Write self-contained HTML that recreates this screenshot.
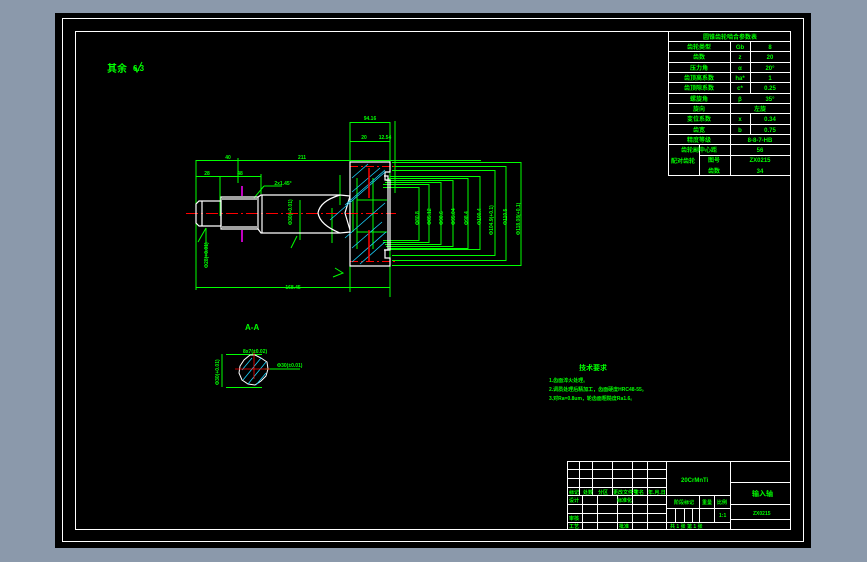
<!DOCTYPE html>
<html><head><meta charset="utf-8"><style>
html,body{margin:0;padding:0;background:#8b99ab;}
svg{display:block}
text{font-family:"Liberation Sans","Noto Sans CJK SC",sans-serif;fill:#00ff00;font-weight:bold}
</style></head><body>
<svg width="867" height="562" viewBox="0 0 867 562" xmlns="http://www.w3.org/2000/svg">
<rect x="0" y="0" width="867" height="562" fill="#8b99ab"/>
<rect x="55" y="13" width="756" height="535" fill="#000"/>
<rect x="62.5" y="18.5" width="741" height="523" fill="none" stroke="#fff" stroke-width="1"/>
<rect x="75.5" y="31.5" width="715" height="498" fill="none" stroke="#fff" stroke-width="1"/>

<text x="107" y="72" font-size="10">其余</text>
<text x="133" y="71" font-size="8">6.3</text>
<path d="M134 66 l3 6 l5 -10" stroke="#0f0" fill="none"/>

<!-- parameter table -->
<g stroke="#fff" stroke-width="1" fill="none">
<rect x="668.5" y="31.5" width="122" height="144"/>
<path d="M668 41.5h123M668 51.5h123M668 62.5h123M668 72.5h123M668 82.5h123M668 93.5h123M668 103.5h123M668 113.5h123M668 124.5h123M668 134.5h123M668 144.5h123M699 155.5h92"/>
<path d="M730.5 41v134M750.5 41v52M750.5 113v21M699.5 144v31"/>
</g>
<g font-size="6" text-anchor="middle">
<text x="730" y="39">圆锥齿轮啮合参数表</text>
<text x="699" y="49">齿轮类型</text><text x="740" y="49">Gb</text><text x="770" y="49">8</text>
<text x="699" y="59">齿数</text><text x="740" y="59">z</text><text x="770" y="59">20</text>
<text x="699" y="70">压力角</text><text x="740" y="70">α</text><text x="770" y="70">20°</text>
<text x="699" y="80">齿顶高系数</text><text x="740" y="80">ha*</text><text x="770" y="80">1</text>
<text x="699" y="90">齿顶隙系数</text><text x="740" y="90">c*</text><text x="770" y="90">0.25</text>
<text x="699" y="101">螺旋角</text><text x="740" y="101">β</text><text x="770" y="101">35°</text>
<text x="699" y="111">旋向</text><text x="760" y="111">左旋</text>
<text x="699" y="121">变位系数</text><text x="740" y="121">x</text><text x="770" y="121">0.34</text>
<text x="699" y="132">齿宽</text><text x="740" y="132">b</text><text x="770" y="132">0.75</text>
<text x="699" y="142">精度等级</text><text x="760" y="142">8-8-7-HB</text>
<text x="699" y="152">齿轮副中心距</text><text x="760" y="152">56</text>
<text x="683" y="163">配对齿轮</text><text x="714" y="162">图号</text><text x="760" y="162">ZX0215</text>
<text x="714" y="173">齿数</text><text x="760" y="173">34</text>
</g>

<!-- main view -->
<g stroke="#0f0" stroke-width="1" fill="none">
<!-- dims top -->
<path d="M196 160v130M196 160.5h285M196 176.5h65M238 158v25M261 174v20M220 176v40M350 122v170M350 122.5h40M350 141.5h40M390 122v175M196 287.5h194M395 121v72M396 141.5h0"/>
<path d="M264 186h18M264 186l-10 12"/>
<path d="M206 228v30M300 200v40M206 228l-8 14M297 236l-6 12"/>
<!-- nested bracket dims -->
<path d="M383 187.5h36v53h-36M383 184.5h46v58h-46M385 182.5h56v62h-56M386 180.5h67v66h-67M388 178.5h80v70h-80M390 176.5h90v73h-90M392 170.5h103v85h-103M392 166.5h114v94h-114M392 162.5h129v103h-129"/>
<path d="M357 178v71M373 178v71M353 200v32M357 200h30M357 232h30"/>
<path d="M332 208v35M340 175v30"/>
<path d="M335 268l8 5 l-10 4"/>
</g>
<!-- centerline -->
<path d="M186 213.5h210" stroke="#f00" stroke-dasharray="12 3 2 3" fill="none"/>
<path d="M350 166.5h45M350 261.5h45" stroke="#f00" stroke-dasharray="8 3 2 3"/>
<!-- shaft -->
<g stroke="#fff" stroke-width="1.2" fill="none">
<path d="M199 201h22v25h-22l-3 -3v-19z M202 201v25"/>
<path d="M221 197h37v32h-37z M222 199h35M222 227h35"/>
<path d="M258 197l3 -2h79l10 1M258 229l3 4h79l10 -1 M262 195v38"/>
<path d="M350 162h40v10h-5v8h5v70h-5v8h5v8h-40z"/>
<path d="M340 195q-20 6 -22 18q2 12 22 20"/>
<path d="M350 196l-5 17l5 17"/>
<path d="M384 176h4v74h-4"/>
</g>
<g stroke="#19d3ff" stroke-width="0.8">
<path d="M352 178l16 -14M352 192l28 -24M345 205l40 -35M330 220l55 -48M345 238l40 -35M352 248l30 -26M352 262l34 -30M360 264l25 -22"/>
</g>
<path d="M369 168v30M369 230v32" stroke="#f00" stroke-width="1.5"/>
<g fill="#0f0" font-size="5" text-anchor="middle">
<text x="228" y="159">40</text><text x="302" y="159">211</text>
<text x="370" y="120">94.16</text><text x="364" y="139">20</text><text x="385" y="139">12.54</text>
<text x="207" y="175">28</text><text x="240" y="175">48</text>
<text x="283" y="185">2x1.45°</text>
<text x="293" y="289">168.45</text>
</g>
<g fill="#0f0" font-size="5">
<text transform="translate(292 225) rotate(-90)">Φ30(+0.01)</text>
<text transform="translate(208 268) rotate(-90)">Φ28(+0.01)</text>
<text transform="translate(419 225) rotate(-90)">Φ80.8</text>
<text transform="translate(431 225) rotate(-90)">Φ85.12</text>
<text transform="translate(443 225) rotate(-90)">Φ90.6</text>
<text transform="translate(455 225) rotate(-90)">Φ95.04</text>
<text transform="translate(468 225) rotate(-90)">Φ98.4</text>
<text transform="translate(481 225) rotate(-90)">Φ100.4</text>
<text transform="translate(493 235) rotate(-90)">Φ104.9(+0.1)</text>
<text transform="translate(507 225) rotate(-90)">Φ110.5</text>
<text transform="translate(520 235) rotate(-90)">Φ118.08(+0.1)</text>
</g>
<path d="M242 186v10M242 230v12" stroke="#f0f" stroke-width="1.5"/>

<!-- section A-A -->
<text x="245" y="330" font-size="8">A-A</text>
<path d="M226 354.5h36M222 354v33M226 387.5h36" stroke="#0f0" fill="none"/>
<path d="M265 369h35" stroke="#0f0"/>
<path d="M255 355l6 3l6 4l1 7l-2 7l-5 5l-6 4l-7 -1l-6 -4l-3 -7l1 -7l4 -6l6 -5z" fill="none" stroke="#fff"/>
<g stroke="#19d3ff" stroke-width="0.8"><path d="M242 370l10 -12M243 380l18 -22M248 384l18 -22M256 385l10 -12"/></g>
<path d="M235 369h35M254 351v28" stroke="#f00" stroke-width="0.8"/>
<g font-size="5"><text x="243" y="353">8x7(±0.02)</text><text x="277" y="367">Φ30(±0.01)</text>
<text transform="translate(219 385) rotate(-90)">Φ30(+0.01)</text></g>

<!-- tech requirements -->
<text x="579" y="370" font-size="7">技术要求</text>
<g font-size="5"><text x="549" y="382">1.齿面淬火处理。</text>
<text x="549" y="391">2.调质处理后精加工，齿面硬度HRC48-55。</text>
<text x="549" y="400">3.对Ra=0.8um，轮齿面粗糙度Ra1.6。</text></g>

<!-- title block -->
<g stroke="#fff" stroke-width="1" fill="none">
<rect x="567.5" y="461.5" width="223" height="68"/>
<path d="M567 469.5h99M567 478.5h99M567 487.5h99M567 495.5h163M567 504.5h99M567 513.5h99M567 522.5h163M666 508.5h64"/>
<path d="M579.5 461v34M592.5 461v34M612.5 461v34M632.5 461v69M647.5 461v69M582.5 495v35M597.5 495v35M617.5 495v35"/>
<path d="M666.5 461v69M730.5 461v69M699.5 495v27M714.5 495v27M675.5 508v14M684.5 508v14M692.5 508v14M730 482.5h61M730 504.5h61M730 519.5h61"/>
</g>
<g font-size="5">
<text x="681" y="482" font-size="6">20CrMnTi</text>
<text x="569" y="494">标记</text><text x="583" y="494">处数</text><text x="598" y="494">分区</text><text x="613" y="494">更改文件号</text><text x="634" y="494">签名</text><text x="648" y="494">年.月.日</text>
<text x="569" y="502">设计</text><text x="617" y="502">标准化</text>
<text x="569" y="520">审核</text><text x="569" y="528">工艺</text><text x="619" y="528">批准</text>
<text x="674" y="504">阶段标记</text><text x="702" y="504">重量</text><text x="717" y="504">比例</text>
<text x="719" y="517">1:1</text>
<text x="670" y="528">共 1 张   第 1 张</text>
<text x="752" y="496" font-size="7">输入轴</text>
<text x="753" y="515">ZX0215</text>
</g>
</svg>
</body></html>
